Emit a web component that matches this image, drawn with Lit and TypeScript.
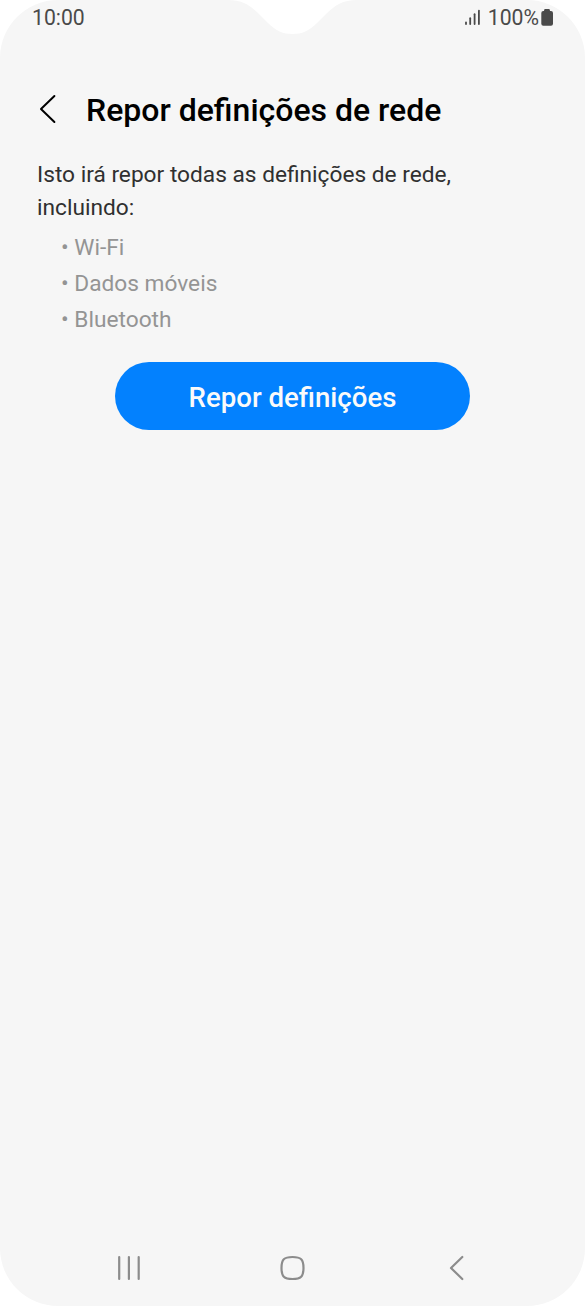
import { LitElement, html, css, svg } from "lit";
import { customElement } from "lit/decorators.js";

@customElement("app-root")
export class AppRoot extends LitElement {
  static styles = css`
    :host {
      display: block;
      background: #fff;
      font-family: Roboto, sans-serif;
    }
    * { box-sizing: border-box; margin: 0; padding: 0; }
    svg { display: block; fill: none; flex: none; }
    .screen {
      position: relative;
      display: flex;
      flex-direction: column;
      width: 585px;
      height: 1306px;
      overflow: hidden;
      background: #f6f6f6;
      border-radius: 58px;
    }
    .notch { position: absolute; top: 0; left: 228px; }
    .status {
      display: flex;
      justify-content: space-between;
      height: 34px;
      padding: 0 32px 0 32px;
      color: #4a4a4a;
      font-size: 21.2px;
      line-height: 35px;
    }
    .indicators { display: flex; }
    .signal { margin: 8px 7px 0 0; }
    .battery { margin: 8px 0 0 2px; }
    .header {
      display: flex;
      align-items: center;
      height: 76px;
      margin-top: 34px;
      padding: 8px 0 0 38px;
    }
    h1 {
      margin-left: 28px;
      font-size: 32px;
      font-weight: 500;
      line-height: 40px;
      color: #000;
      white-space: nowrap;
    }
    .intro {
      padding: 14px 37px 0;
      font-size: 22.7px;
      line-height: 33px;
      color: #303030;
      white-space: nowrap;
    }
    ul {
      list-style: none;
      padding: 6px 0 0 61px;
      font-size: 22.7px;
      line-height: 36px;
      color: #949494;
    }
    button {
      align-self: center;
      width: 355px;
      height: 68px;
      margin-top: 24px;
      padding-top: 3px;
      border: 0;
      border-radius: 34px;
      background: #0381fe;
      color: #fafafa;
      font: 500 27.6px/65px Roboto, sans-serif;
    }
    .nav {
      display: flex;
      align-items: center;
      margin-top: auto;
      height: 76px;
      padding-left: 116px;
    }
    .home { margin-left: 137px; }
    .back { margin-left: 142px; }
  `;

  private items = ["Wi-Fi", "Dados móveis", "Bluetooth"];

  render() {
    return html`
      <main class="screen">
        <svg class="notch" width="130" height="36" viewBox="0 0 130 36">
          <path fill="#fff" d="M0 0C14 0 22 5 32 15L40 23C48 31 55 34 64.500 34S81 31 89 23L97 15C107 5 115 0 129 0Z" />
        </svg>
        <div class="status">
          <span>10:00</span>
          <div class="indicators">
            <svg class="signal" width="17" height="18" viewBox="0 0 17 18">
              <g stroke="#4a4a4a" stroke-width="1.8" stroke-linecap="round">
                ${[[2, 14.5], [6.2, 10.2], [10.6, 6.2], [14.9, 2.6]].map(
                  ([x, y]) => svg`<path d="M${x} ${y}V16" />`
                )}
              </g>
            </svg>
            <span>100%</span>
            <svg class="battery" width="12" height="18" viewBox="0 0 12 18">
              <path fill="#4a4a4a" d="M4 1H8Q9 1 9 3H10Q12 3 12 5V15.700Q12 17.700 10 17.700H2.300Q0.300 17.700 0.300 15.700V5Q0.300 3 2.300 3H3Q3 1 4 1Z" />
            </svg>
          </div>
        </div>
        <header class="header">
          <svg width="20" height="32" viewBox="0 0 20 32">
            <path d="M16.400 2L3 15L16.400 28" stroke="#000" stroke-width="2" stroke-linecap="round" stroke-linejoin="round" />
          </svg>
          <h1>Repor definições de rede</h1>
        </header>
        <p class="intro">Isto irá repor todas as definições de rede,<br />incluindo:</p>
        <ul>
          ${this.items.map((item) => html`<li>• ${item}</li>`)}
        </ul>
        <button>Repor definições</button>
        <nav class="nav">
          <svg width="26" height="26" viewBox="0 0 26 26">
            <path d="M3.200 2V24M12.900 2V24M22.700 2V24" stroke="#8c8c8c" stroke-width="2.200" stroke-linecap="round" />
          </svg>
          <svg class="home" width="27" height="26" viewBox="0 0 27 26">
            <path d="M13.500 2C22 2 24.500 4.500 24.500 13S22 24 13.500 24S2.500 21.500 2.500 13S5 2 13.500 2Z" stroke="#8c8c8c" stroke-width="2.200" />
          </svg>
          <svg class="back" width="18" height="26" viewBox="0 0 18 26">
            <path d="M14.300 2L3 13L14.300 24" stroke="#8c8c8c" stroke-width="2.200" stroke-linecap="round" stroke-linejoin="round" />
          </svg>
        </nav>
      </main>
    `;
  }
}
